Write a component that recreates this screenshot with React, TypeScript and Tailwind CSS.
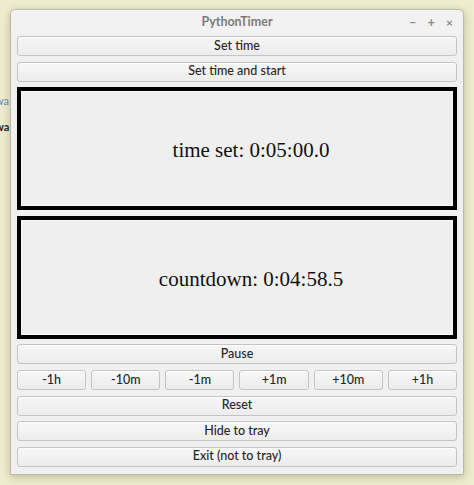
import React from "react";

const btn =
  "flex h-[20px] items-center justify-center rounded-[3px] border border-[#c4c4c4] bg-gradient-to-b from-[#f7f7f7] to-[#ececec] text-[12.5px] font-medium text-[#262626] shadow-[0_1px_0_rgba(255,255,255,0.8)_inset]";

function Btn({ label, className = "" }: { label: string; className?: string }) {
  return <button className={`${btn} ${className}`}>{label}</button>;
}

function Display({ text }: { text: string }) {
  return (
    <div className="flex h-[123px] items-center justify-center border-[4px] border-black bg-[#efefef] pl-[28px] shadow-[inset_0_0_0_1px_#fafafa]">
      <span className="pt-[4px] text-[21px] text-[#111]" style={{ fontFamily: '"Liberation Serif", serif' }}>
        {text}
      </span>
    </div>
  );
}

export default function App() {
  const steps = ["-1h", "-10m", "-1m", "+1m", "+10m", "+1h"];
  return (
    <div
      className="relative h-[485px] w-[474px] overflow-hidden bg-[#eeedcf] pl-[10px] pt-[9px]"
      style={{ fontFamily: 'Lato, "Open Sans", sans-serif' }}
    >
      {/* bits of the desktop behind the window */}
      <div className="absolute left-[-5px] top-[95px] text-[11px] leading-none text-[#6a86b0]">wa</div>
      <div className="absolute left-[-5px] top-[121px] text-[11px] font-bold leading-none text-[#222]">wa</div>

      <div className="relative flex h-[466px] w-[454px] flex-col rounded-t-[5px] border border-[#b9b9b0] bg-[#f0f0f0] shadow-[0_2px_8px_rgba(90,90,40,0.35)]">
        <div className="relative flex h-[24px] items-center justify-center rounded-t-[5px] bg-[#f2f2f2]">
          <span className="text-[12.5px] font-bold text-[#7c7c7c]">PythonTimer</span>
          <div className="absolute right-[10px] top-[3px] flex items-center gap-[11px] text-[13px] font-bold text-[#8a8a8a]">
            <span>–</span>
            <span>+</span>
            <span className="text-[12px]">×</span>
          </div>
        </div>

        <div className="flex flex-1 flex-col gap-[5.6px] px-[6px] pt-[2px]">
          <Btn label="Set time" />
          <Btn label="Set time and start" />
          <Display text="time set: 0:05:00.0" />
          <Display text="countdown: 0:04:58.5" />
          <Btn label="Pause" />
          <div className="grid grid-cols-6 gap-[5px]">
            {steps.map((s) => (
              <Btn key={s} label={s} />
            ))}
          </div>
          <Btn label="Reset" />
          <Btn label="Hide to tray" />
          <Btn label="Exit (not to tray)" />
        </div>
      </div>
    </div>
  );
}
